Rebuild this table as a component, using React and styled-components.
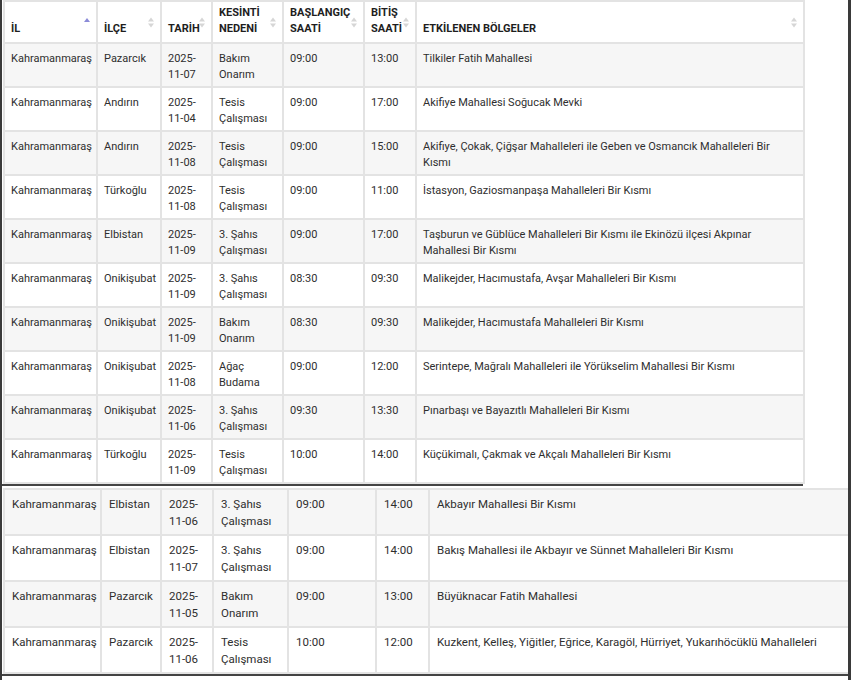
import React from 'react'
import styled, { createGlobalStyle } from 'styled-components'

const GlobalStyle = createGlobalStyle`
  body {
    margin: 0;
    background: #fff;
    font-family: Roboto, "Liberation Sans", Arial, sans-serif;
  }
`

const Frame = styled.div`
  width: 851px;
  height: 680px;
  box-sizing: border-box;
  border-left: 2px solid #3a3a3a;
  border-right: 3px solid #3a3a3a;
  background: #fff;
  overflow: hidden;
`

const TopBlock = styled.div`
  width: 801px;
  padding-left: 1px;
  box-sizing: border-box;
  border-bottom: 2px solid #444;
`

const BottomBlock = styled.div`
  margin-top: 2px;
  padding-left: 1px;
  border-bottom: 2px solid #444;
`

const Table = styled.table`
  width: ${p => p.$width}px;
  table-layout: fixed;
  border-collapse: separate;
  border-spacing: 0;
  border-top: 2px solid #e3e3e3;
  border-left: 2px solid #e3e3e3;
  font-size: ${p => p.$font}px;
  line-height: ${p => p.$line}px;
  color: #2e2e2e;
`

const Col = styled.col`
  width: ${p => p.$w}px;
`

const HeadRow = styled.tr`
  height: 42px;
  background: #fff;
`

const Th = styled.th`
  position: relative;
  text-align: left;
  vertical-align: bottom;
  padding: 0 14px 5px 6px;
  font-size: 11px;
  line-height: 16px;
  font-weight: 700;
  color: #1e1e1e;
  border-right: 2px solid #e3e3e3;
  border-bottom: 2px solid #e3e3e3;
`

const SortMark = styled.svg`
  position: absolute;
  right: 6px;
  top: 15px;
`

const Row = styled.tr`
  height: ${p => p.$h}px;
  background: ${p => (p.$odd ? '#f6f6f6' : '#fff')};
`

const Td = styled.td`
  vertical-align: top;
  padding: ${p => p.$pt}px 4px 0 ${p => p.$pl}px;
  border-right: 2px solid #e3e3e3;
  border-bottom: 2px solid #e3e3e3;
  white-space: normal;
`

const top = [
  ['Kahramanmaraş', 'Pazarcık', '2025-11-07', 'Bakım Onarım', '09:00', '13:00', 'Tilkiler Fatih Mahallesi'],
  ['Kahramanmaraş', 'Andırın', '2025-11-04', 'Tesis Çalışması', '09:00', '17:00', 'Akifiye Mahallesi Soğucak Mevki'],
  ['Kahramanmaraş', 'Andırın', '2025-11-08', 'Tesis Çalışması', '09:00', '15:00', 'Akifiye, Çokak, Çiğşar Mahalleleri ile Geben ve Osmancık Mahalleleri Bir Kısmı'],
  ['Kahramanmaraş', 'Türkoğlu', '2025-11-08', 'Tesis Çalışması', '09:00', '11:00', 'İstasyon, Gaziosmanpaşa Mahalleleri Bir Kısmı'],
  ['Kahramanmaraş', 'Elbistan', '2025-11-09', '3. Şahıs Çalışması', '09:00', '17:00', 'Taşburun ve Güblüce Mahalleleri Bir Kısmı ile Ekinözü ilçesi Akpınar Mahallesi Bir Kısmı'],
  ['Kahramanmaraş', 'Onikişubat', '2025-11-09', '3. Şahıs Çalışması', '08:30', '09:30', 'Malikejder, Hacımustafa, Avşar Mahalleleri Bir Kısmı'],
  ['Kahramanmaraş', 'Onikişubat', '2025-11-09', 'Bakım Onarım', '08:30', '09:30', 'Malikejder, Hacımustafa Mahalleleri Bir Kısmı'],
  ['Kahramanmaraş', 'Onikişubat', '2025-11-08', 'Ağaç Budama', '09:00', '12:00', 'Serintepe, Mağralı Mahalleleri ile Yörükselim Mahallesi Bir Kısmı'],
  ['Kahramanmaraş', 'Onikişubat', '2025-11-06', '3. Şahıs Çalışması', '09:30', '13:30', 'Pınarbaşı ve Bayazıtlı Mahalleleri Bir Kısmı'],
  ['Kahramanmaraş', 'Türkoğlu', '2025-11-09', 'Tesis Çalışması', '10:00', '14:00', 'Küçükimalı, Çakmak ve Akçalı Mahalleleri Bir Kısmı'],
]

const bottom = [
  ['Kahramanmaraş', 'Elbistan', '2025-11-06', '3. Şahıs Çalışması', '09:00', '14:00', 'Akbayır Mahallesi Bir Kısmı'],
  ['Kahramanmaraş', 'Elbistan', '2025-11-07', '3. Şahıs Çalışması', '09:00', '14:00', 'Bakış Mahallesi ile Akbayır ve Sünnet Mahalleleri Bir Kısmı'],
  ['Kahramanmaraş', 'Pazarcık', '2025-11-05', 'Bakım Onarım', '09:00', '13:00', 'Büyüknacar Fatih Mahallesi'],
  ['Kahramanmaraş', 'Pazarcık', '2025-11-06', 'Tesis Çalışması', '10:00', '12:00', 'Kuzkent, Kelleş, Yiğitler, Eğrice, Karagöl, Hürriyet, Yukarıhöcüklü Mahalleleri'],
]

const headers = [
  ['İL'],
  ['İLÇE'],
  ['TARİH'],
  ['KESİNTİ', 'NEDENİ'],
  ['BAŞLANGIÇ', 'SAATİ'],
  ['BİTİŞ', 'SAATİ'],
  ['ETKİLENEN BÖLGELER'],
]

const topCols = [93, 64, 51, 71, 81, 52, 388]
const bottomCols = [97, 60, 52, 75, 88, 53, 421]

const SortIcon = ({ active }) => (
  <SortMark width="6" height="11" viewBox="0 0 6 11">
    {active ? (
      <polygon points="0,5 3,1 6,5" fill="#8b8bd8" />
    ) : (
      <>
        <polygon points="0,4.5 3,0.5 6,4.5" fill="#d6d6d6" />
        <polygon points="0,6.5 3,10.5 6,6.5" fill="#d6d6d6" />
      </>
    )}
  </SortMark>
)

const Cell = ({ text, pt, pl }) => {
  // dates break after the year like the narrow column in the source
  const parts = /^\d{4}-\d\d-\d\d$/.test(text) ? [text.slice(0, 5), text.slice(5)] : null
  return (
    <Td $pt={pt} $pl={pl}>
      {parts ? <>{parts[0]}<br />{parts[1]}</> : text}
    </Td>
  )
}

const DataTable = ({ rows, cols, width, font, line, rowH, pt, pl, withHead }) => (
  <Table $width={width} $font={font} $line={line}>
    <colgroup>
      {cols.map((w, i) => <Col key={i} $w={w} />)}
    </colgroup>
    {withHead && (
      <thead>
        <HeadRow>
          {headers.map((h, i) => (
            <Th key={i}>
              {h.map((l, j) => <React.Fragment key={j}>{j > 0 && <br />}{l}</React.Fragment>)}
              <SortIcon active={i === 0} />
            </Th>
          ))}
        </HeadRow>
      </thead>
    )}
    <tbody>
      {rows.map((r, i) => (
        <Row key={i} $odd={i % 2 === 0} $h={rowH}>
          {r.map((c, j) => <Cell key={j} text={c} pt={pt} pl={pl} />)}
        </Row>
      ))}
    </tbody>
  </Table>
)

export default function App() {
  return (
    <>
      <GlobalStyle />
      <Frame>
        <TopBlock>
          <DataTable rows={top} cols={topCols} width={800} font={11} line={15.5} rowH={44} pt={7} pl={6} withHead />
        </TopBlock>
        <BottomBlock>
          <DataTable rows={bottom} cols={bottomCols} width={845} font={11.5} line={16.5} rowH={46} pt={6} pl={7} />
        </BottomBlock>
      </Frame>
    </>
  )
}
